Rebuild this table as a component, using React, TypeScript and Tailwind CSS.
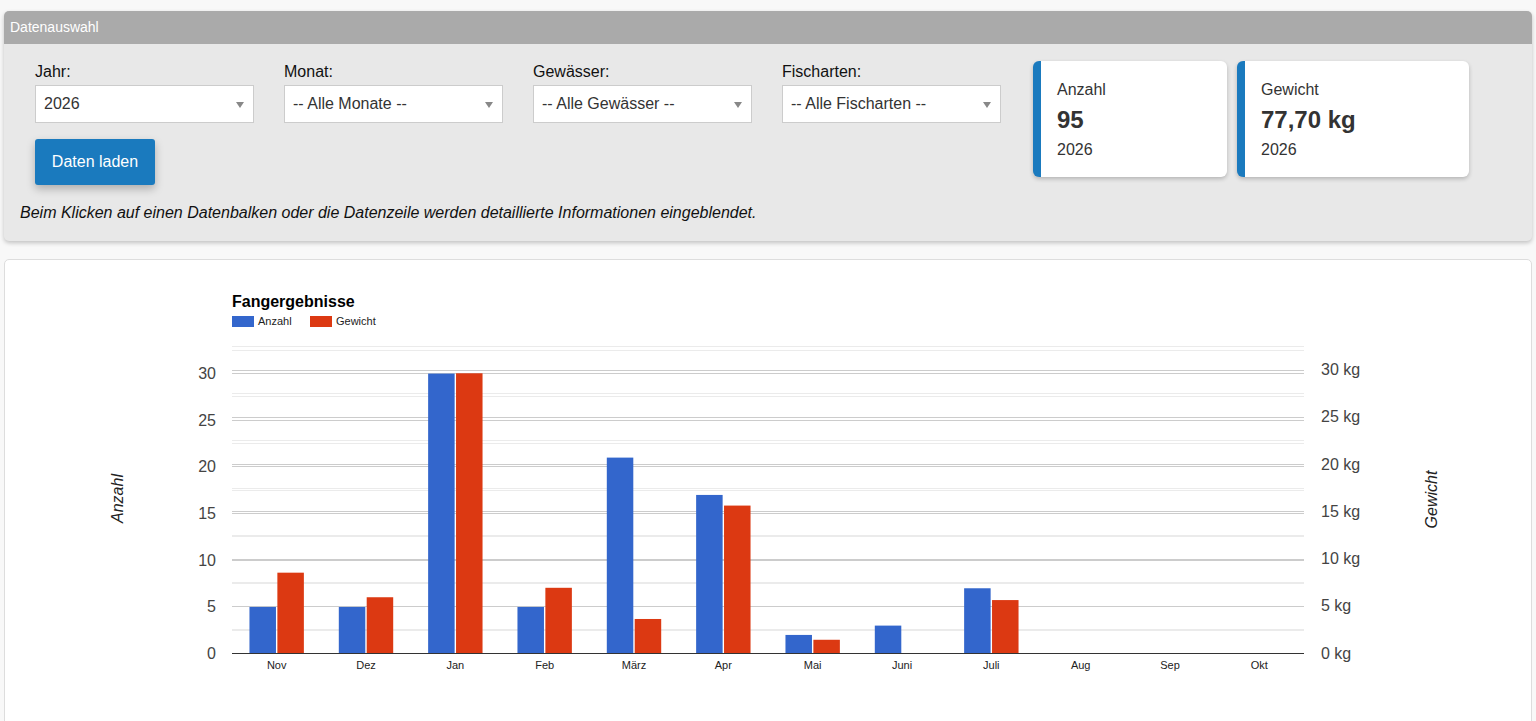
import React from "react";

const months = ["Nov", "Dez", "Jan", "Feb", "März", "Apr", "Mai", "Juni", "Juli", "Aug", "Sep", "Okt"];
const anz = [5, 5, 30, 5, 21, 17, 2, 3, 7, 0, 0, 0];
const gew = [8.5, 5.9, 29.6, 6.9, 3.6, 15.6, 1.4, 0, 5.6, 0, 0, 0];

const X0 = 232;
const X1 = 1304;
const BASE = 653;
const kL = 280 / 30;
const kR = 283.5 / 30;
const FONT = '"Liberation Sans", Arial, sans-serif';

function Chart() {
  const groupW = (X1 - X0) / 12;
  const steps: number[] = [];
  for (let v = 2.5; v <= 32.5; v += 2.5) steps.push(v);
  const line = (y: number) => Math.round(y) + 0.5;
  return (
    <svg width="1526" height="470" className="block">
      <g transform="translate(-5 -260)" fontFamily={FONT}>
        <text x="232" y="306.5" fontSize="16" fontWeight="bold" fill="#000">
          Fangergebnisse
        </text>
        <rect x="232" y="316" width="22" height="11" fill="#3366cc" />
        <text x="258" y="325" fontSize="11" fill="#222">Anzahl</text>
        <rect x="310" y="316" width="22" height="11" fill="#dc3912" />
        <text x="336" y="325" fontSize="11" fill="#222">Gewicht</text>

        {steps.map((v) => {
          const major = Math.abs(v % 5) < 0.01;
          if (major) return null;
          return (
            <g key={"m" + v}>
              <line x1={X0} x2={X1} y1={line(BASE - v * kL)} y2={line(BASE - v * kL)} stroke="#ebebeb" strokeWidth="1" />
              <line x1={X0} x2={X1} y1={line(BASE - v * kR)} y2={line(BASE - v * kR)} stroke="#ebebeb" strokeWidth="1" />
            </g>
          );
        })}
        {steps.map((v) => {
          const major = Math.abs(v % 5) < 0.01;
          if (!major) return null;
          return (
            <g key={"M" + v}>
              <line x1={X0} x2={X1} y1={line(BASE - v * kL)} y2={line(BASE - v * kL)} stroke="#cccccc" strokeWidth="1" />
              <line x1={X0} x2={X1} y1={line(BASE - v * kR)} y2={line(BASE - v * kR)} stroke="#cccccc" strokeWidth="1" />
            </g>
          );
        })}

        {[0, 5, 10, 15, 20, 25, 30].map((v) => (
          <text key={"l" + v} x="216" y={BASE - v * kL + 6} fontSize="16" fill="#444" textAnchor="end">
            {v}
          </text>
        ))}
        {[0, 5, 10, 15, 20, 25, 30].map((v) => (
          <text key={"r" + v} x="1321" y={BASE - v * kR + 5.5} fontSize="16" fill="#444">
            {v} kg
          </text>
        ))}

        {months.map((m, i) => {
          const c = X0 + groupW * (i + 0.5);
          const hb = anz[i] * kL - (anz[i] > 0 ? 0.6 : 0);
          const hr = gew[i] * kR;
          return (
            <g key={m}>
              {hb > 0 && <rect x={c - 27.2} y={BASE - hb} width="26.5" height={hb} fill="#3366cc" />}
              {hr > 0 && <rect x={c + 0.7} y={BASE - hr} width="26.5" height={hr} fill="#dc3912" />}
              <text x={c} y="669" fontSize="11" fill="#222" textAnchor="middle">
                {m}
              </text>
            </g>
          );
        })}

        <line x1={X0} x2={X1} y1="653.5" y2="653.5" stroke="#333" strokeWidth="1" />

        <text
          x="122.5"
          y="498.5"
          fontSize="16"
          fontStyle="italic"
          fill="#222"
          textAnchor="middle"
          transform="rotate(-90 122.5 498.5)"
        >
          Anzahl
        </text>
        <text
          x="1436.5"
          y="499.5"
          fontSize="16"
          fontStyle="italic"
          fill="#222"
          textAnchor="middle"
          transform="rotate(-90 1436.5 499.5)"
        >
          Gewicht
        </text>
      </g>
    </svg>
  );
}

function Select({ label, value }: { label: string; value: string }) {
  return (
    <div className="w-[219px]">
      <div className="text-[16px] leading-[20px] text-[#111]">{label}</div>
      <div className="mt-[3px] h-[38px] bg-white border border-[#cccccc] flex items-center justify-between pl-[8px] pr-[9px]">
        <span className="text-[16px] text-[#333]">{value}</span>
        <svg width="8" height="6" viewBox="0 0 8 6" className="translate-y-[1px]">
          <path d="M0 0 L8 0 L4 6 Z" fill="#888" />
        </svg>
      </div>
    </div>
  );
}

function StatCard({ title, value, sub, width }: { title: string; value: string; sub: string; width: string }) {
  return (
    <div
      className={`${width} h-[116px] bg-white rounded-[6px] border-l-[8px] border-[#1a7abe] shadow-[0_2px_4px_rgba(0,0,0,0.22)] pl-[16px] pt-[17px] text-[#333]`}
    >
      <div className="text-[16px] leading-[24px]">{title}</div>
      <div className="mt-[3px] text-[24px] leading-[30px] font-bold">{value}</div>
      <div className="mt-[3px] text-[16px] leading-[24px]">{sub}</div>
    </div>
  );
}

export default function App() {
  return (
    <div
      className="min-h-screen bg-[#f8f8f8] pt-[11px] pl-[4px] pr-[4px] overflow-hidden"
      style={{ fontFamily: FONT }}
    >
      <div className="rounded-[5px] bg-[#e8e8e8] shadow-[0_2px_4px_rgba(0,0,0,0.22)] overflow-hidden">
        <div className="h-[33px] bg-[#aaaaaa] flex items-center pl-[6px] text-white text-[14px]">Datenauswahl</div>
        <div className="px-[16px] pt-[18px] pb-[18px]">
          <div className="flex items-start">
            <div className="pl-[15px] flex flex-col">
              <div className="flex gap-[30px]">
                <Select label="Jahr:" value="2026" />
                <Select label="Monat:" value="-- Alle Monate --" />
                <Select label="Gewässer:" value="-- Alle Gewässer --" />
                <Select label="Fischarten:" value="-- Alle Fischarten --" />
              </div>
              <button className="mt-[16px] w-[120px] h-[46px] rounded-[3px] bg-[#1a7abe] text-white text-[16px] shadow-[0_4px_8px_rgba(0,0,0,0.25)]">
                Daten laden
              </button>
            </div>
            <div className="ml-[32px] -mt-[1px] flex gap-[10px]">
              <StatCard title="Anzahl" value="95" sub="2026" width="w-[194px]" />
              <StatCard title="Gewicht" value="77,70 kg" sub="2026" width="w-[232px]" />
            </div>
          </div>
          <p className="mt-[18px] text-[16px] leading-[20px] italic text-[#111]">
            Beim Klicken auf einen Datenbalken oder die Datenzeile werden detaillierte Informationen eingeblendet.
          </p>
        </div>
      </div>
      <div className="mt-[18px] h-[480px] bg-white border border-[#dddddd] rounded-[5px]">
        <Chart />
      </div>
    </div>
  );
}
